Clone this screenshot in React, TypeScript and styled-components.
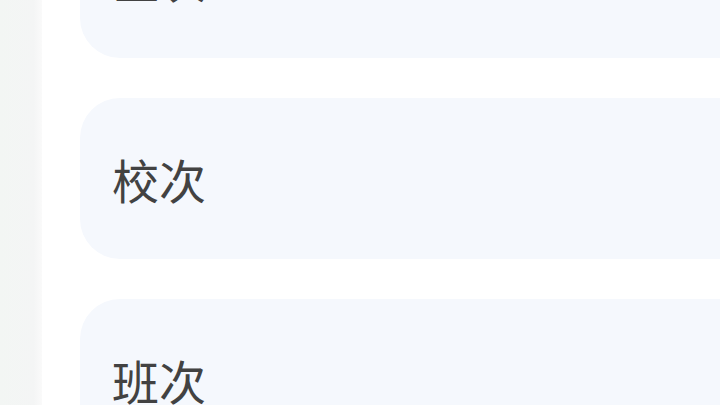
import styled, { createGlobalStyle } from 'styled-components'

const GlobalStyle = createGlobalStyle`
  html, body {
    margin: 0;
    padding: 0;
    background: #ffffff;
    overflow: hidden;
  }
  body {
    font-family: "Noto Sans CJK SC", "Noto Sans", sans-serif;
  }
`

const Screen = styled.div`
  display: flex;
  flex-direction: row;
  width: 720px;
  height: 405px;
  overflow: hidden;
  background: #ffffff;
`

const SideStrip = styled.div`
  flex: 0 0 42px;
  background: linear-gradient(to right, #f3f6f4 0%, #f4f5f5 80%, #fafafa 100%);
`

const List = styled.div`
  flex: 1;
  display: flex;
  flex-direction: column;
  gap: 40px;
  padding-left: 38px;
  margin-top: -103px;
`

const Card = styled.div`
  flex: 0 0 161px;
  margin-right: -60px;
  border-radius: 40px;
  background: #f5f8fd;
  display: flex;
  align-items: center;
  padding-left: 32px;
`

const Label = styled.span`
  font-size: 47px;
  line-height: 1;
  color: #424242;
  letter-spacing: 0;
`

const rows = ['区次', '校次', '班次']

export default function App() {
  return (
    <>
      <GlobalStyle />
      <Screen>
        <SideStrip />
        <List>
          {rows.map((r) => (
            <Card key={r}>
              <Label>{r}</Label>
            </Card>
          ))}
        </List>
      </Screen>
    </>
  )
}
